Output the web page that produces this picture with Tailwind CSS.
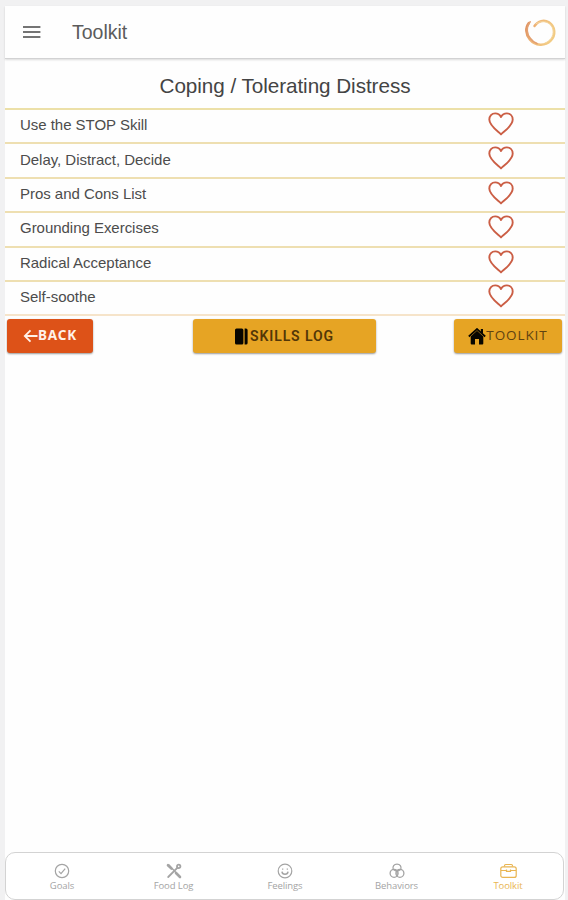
<!DOCTYPE html>
<html lang="en">
<head>
<meta charset="utf-8">
<title>Toolkit</title>
<script src="https://cdn.jsdelivr.net/npm/@tailwindcss/browser@4"></script>
</head>
<body class="h-[900px] w-[568px] overflow-hidden bg-[#f1f1f2] pt-[6px] pl-[5px] font-['Liberation_Sans',Arial,sans-serif] text-[#4c4c4c]">
<svg class="hidden"><defs>
<symbol id="heart" viewBox="0 0 26 24"><path d="M13 22.4 C10 19.4 1.3 13.8 1.3 7.6 C1.3 3.8 3.8 1.4 7.2 1.4 C9.8 1.4 11.8 2.7 13 5 C14.2 2.7 16.2 1.4 18.8 1.4 C22.2 1.4 24.7 3.8 24.7 7.6 C24.7 13.8 16 19.4 13 22.4Z" fill="none" stroke="#cb5e45" stroke-width="1.9" stroke-linejoin="round"/></symbol>
</defs></svg>
<div class="flex h-[894px] w-[560px] flex-col bg-[#fefefe]">
  <header class="flex h-[53px] shrink-0 items-center border-b border-[#d2d2d3] pl-[18px] pr-[9px] shadow-[0_1px_2px_rgba(0,0,0,0.14)]">
    <svg class="h-[14px] w-[18px]" viewBox="0 0 18 14" stroke="#747474" stroke-width="2"><path d="M0 2H17.4M0 7H17.4M0 12H17.4"/></svg>
    <h1 class="ml-[31px] text-[19.5px] leading-6 text-[#5b5b5b]">Toolkit</h1>
    <svg class="ml-auto h-[32px] w-[32px]" viewBox="0 0 32 32" fill="none" stroke-linecap="round">
      <defs><linearGradient id="ring" x1="0" y1="0" x2="1" y2="0.3"><stop offset="0" stop-color="#dd8c5c"/><stop offset=".4" stop-color="#f0b777"/><stop offset="1" stop-color="#f2cb83"/></linearGradient></defs>
      <path d="M10.5 10 C14 4.8 20 3.3 25 6.3 C31.5 10.5 32 19.3 26.7 24.7 C21 30.5 11.2 30 5.8 23.5 C1.4 18 1.2 11.5 4.8 7" stroke="url(#ring)" stroke-width="2.4"/>
      <path d="M6.2 5.8 C1.5 12 3 19 6.5 22.5 C8.2 25 10.2 26.5 13 27.6" stroke="#e3a071" stroke-width="1.6"/>
      <path d="M12 7.7 C20 2.5 28 7.5 29 14 C30 20.5 25.5 25.5 21 27" stroke="#f5d7a0" stroke-width="1"/>
    </svg>
  </header>
  <h2 class="flex h-[48.5px] shrink-0 items-center justify-center pt-[4px] text-[20.7px] tracking-[-0.06px] text-[#444]">Coping / Tolerating Distress</h2>
  <ul class="text-[15px] leading-5 tracking-[-0.03px]">
    <li class="flex h-[34.5px] items-center justify-between border-t-2 border-[#ece0a8] pl-[15px] pr-[51px]"><span class="mb-[2px]">Use the STOP Skill</span><svg class="mb-[4px] h-[24px] w-[26px]"><use href="#heart"/></svg></li>
    <li class="flex h-[34.5px] items-center justify-between border-t-2 border-[#eedfb1] pl-[15px] pr-[51px]"><span class="mb-[1px]">Delay, Distract, Decide</span><svg class="mb-[4px] h-[24px] w-[26px]"><use href="#heart"/></svg></li>
    <li class="flex h-[34.5px] items-center justify-between border-t-2 border-[#eedfb1] pl-[15px] pr-[51px]"><span class="mb-[2px]">Pros and Cons List</span><svg class="mb-[4px] h-[24px] w-[26px]"><use href="#heart"/></svg></li>
    <li class="flex h-[34.5px] items-center justify-between border-t-2 border-[#eedfb1] pl-[15px] pr-[51px]"><span class="mb-[2px]">Grounding Exercises</span><svg class="mb-[4px] h-[24px] w-[26px]"><use href="#heart"/></svg></li>
    <li class="flex h-[34.5px] items-center justify-between border-t-2 border-[#eedfb1] pl-[15px] pr-[51px]"><span class="mb-[2px]">Radical Acceptance</span><svg class="mb-[4px] h-[24px] w-[26px]"><use href="#heart"/></svg></li>
    <li class="flex h-[36px] items-center justify-between border-y-2 border-t-[#eedfb1] border-b-[#f6e4ca] pl-[15px] pr-[51px]"><span class="mb-[2px]">Self-soothe</span><svg class="mb-[4px] h-[24px] w-[26px]"><use href="#heart"/></svg></li>
  </ul>
  <div class="mt-[3px] grid grid-cols-[1fr_183px_1fr] pl-[2px] pr-[3px] text-[13.5px] leading-none">
    <button class="flex h-[34px] w-[86px] items-center justify-center rounded-[3px] bg-[#dd5218] font-['Noto_Sans',sans-serif] text-[13.5px] font-bold text-[#fff1e9] shadow-[0_1px_2px_rgba(0,0,0,0.4)]">
      <svg class="h-[14px] w-[15px]" viewBox="0 0 15 14" fill="none" stroke="currentColor" stroke-width="1.8"><path d="M14.5 7H2M7.5 1.3L1.8 7L7.5 12.7"/></svg><span class="tracking-[0.8px]">BACK</span>
    </button>
    <button class="flex h-[34px] w-[183px] items-center justify-center rounded-[3px] bg-[#e6a424] font-['Roboto',sans-serif] text-[14px] font-semibold text-[#523707] shadow-[0_1px_2px_rgba(0,0,0,0.4)]">
      <svg class="mr-[2px] h-[17px] w-[13px]" viewBox="0 0 13 17" fill="#080600"><rect x="0" y=".5" width="8.4" height="16" rx="1.5"/><path d="M9.6 .5H11Q12.6 .5 12.6 2V15Q12.6 16.5 11 16.5H9.6Z"/></svg><span class="tracking-[0.9px]">SKILLS LOG</span>
    </button>
    <button class="ml-auto flex h-[34px] w-[108px] items-center justify-center rounded-[3px] bg-[#e6a424] font-['Open_Sans',sans-serif] text-[#5f4211] shadow-[0_1px_2px_rgba(0,0,0,0.4)]">
      <svg class="h-[17px] w-[18px]" viewBox="0 0 18 17" fill="#080600"><path d="M9 2.8L2.7 8.6V15.5Q2.7 16.5 3.7 16.5H7V11H11V16.5H14.3Q15.3 16.5 15.3 15.5V8.6ZM12.8 1H15V5H12.8Z"/><path d="M.8 8.5L9 1L17.2 8.5" fill="none" stroke="#080600" stroke-width="1.7"/></svg><span class="tracking-[0.9px]">TOOLKIT</span>
    </button>
  </div>
  <nav class="mt-auto flex h-[48px] w-[559px] shrink-0 justify-between rounded-[10px] border-[1.5px] border-[#d3d3d3] bg-white pt-[10px] pl-[26px] pr-[25px] font-['Open_Sans',sans-serif] text-[9.5px] leading-[12px] tracking-[-0.1px] text-[#a4a4a4]">
    <a class="flex w-[60px] flex-col items-center gap-px"><svg class="size-[16px]" viewBox="0 0 16 16" fill="none" stroke="currentColor" stroke-width="1.2"><circle cx="8" cy="8" r="6.7"/><path d="M4.8 8.4L7 10.6L11.2 5.6"/></svg>Goals</a>
    <a class="flex w-[60px] flex-col items-center gap-px"><svg class="size-[16px]" viewBox="0 0 16 16" fill="none" stroke="currentColor" stroke-linecap="round"><path d="M2 2.2L5.5 5.6M10 10L14 14" stroke-width="2.6"/><path d="M3 2L14 14" stroke-width="1.3"/><path d="M2.2 14L11.3 4.8" stroke-width="1.8"/><circle cx="12.7" cy="3.4" r="1.7" stroke-width="1.8"/></svg>Food Log</a>
    <a class="flex w-[60px] flex-col items-center gap-px"><svg class="size-[16px]" viewBox="0 0 16 16" fill="none" stroke="currentColor" stroke-width="1.2"><circle cx="8" cy="8" r="6.8"/><path d="M5 8.6C5.3 12 10.7 12 11 8.6" stroke-width="1.5"/><path d="M5.7 5.5V6.8M10.3 5.5V6.8"/></svg>Feelings</a>
    <a class="flex w-[60px] flex-col items-center gap-px"><svg class="size-[16px]" viewBox="0 0 16 16" fill="none" stroke="currentColor" stroke-width="1.3"><path d="M4.2 6.8C3.2 3.4 5.1 1.2 8 1.2S12.8 3.4 11.8 6.8"/><circle cx="5.1" cy="10.3" r="4"/><circle cx="10.9" cy="10.3" r="4"/><path d="M4.5 6.5Q8 9.5 11.5 6.5M8 8V13"/></svg>Behaviors</a>
    <a class="flex w-[60px] flex-col items-center gap-px text-[#e9b552]"><svg class="h-[16px] w-[17px]" viewBox="0 0 17 16" fill="none" stroke="currentColor" stroke-width="1.2"><rect x=".8" y="3.8" width="15.4" height="10.6" rx="2"/><path d="M4.5 3.6V2.7Q4.5 1.5 5.7 1.5H11.3Q12.5 1.5 12.5 2.7V3.6M1 7.5H6.5M10.5 7.5H16M6.5 6.6V8.4H10.5V6.6"/></svg>Toolkit</a>
  </nav>
</div>
</body>
</html>
